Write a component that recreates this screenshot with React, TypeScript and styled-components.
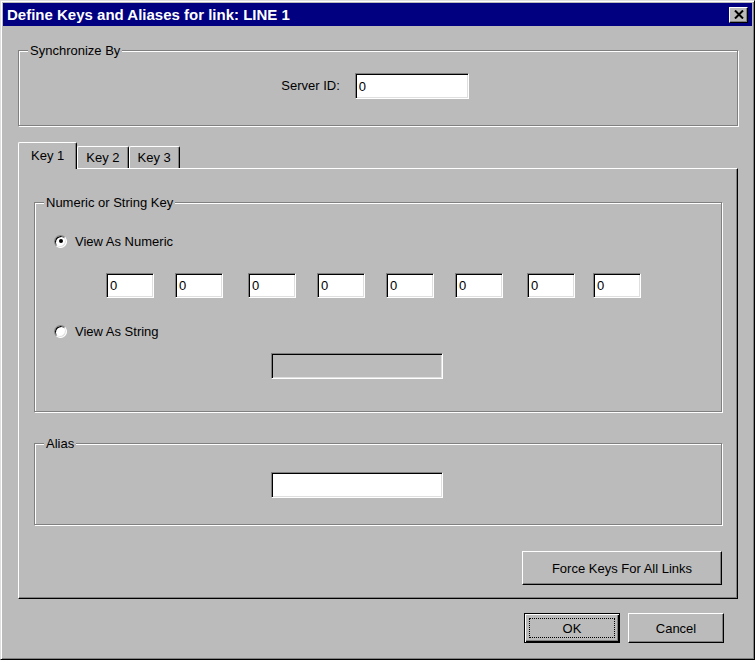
import React from 'react';
import styled, { createGlobalStyle } from 'styled-components';

const face = '#bbbbbb';
const shadow = '#808080';
const light = '#dfdfdf';
const titleBlue = '#000080';

const GlobalStyle = createGlobalStyle`
  html, body {
    margin: 0;
    padding: 0;
    background: ${face};
  }
  body {
    font-family: 'Liberation Sans', Arial, sans-serif;
    font-size: 13px;
    color: #000;
  }
  * {
    box-sizing: border-box;
  }
`;

const Window = styled.div`
  width: 755px;
  height: 660px;
  background: ${face};
  border: 1px solid;
  border-color: ${light} #000 #000 ${light};
  box-shadow: inset 1px 1px #fff, inset -1px -1px ${shadow};
  padding: 2px;
  display: flex;
  flex-direction: column;
`;

const TitleBar = styled.div`
  height: 23px;
  background: ${titleBlue};
  color: #fff;
  font-weight: bold;
  font-size: 15px;
  display: flex;
  align-items: center;
  justify-content: space-between;
  padding: 0 4px 0 4px;
`;

const CloseButton = styled.button`
  width: 19px;
  height: 16px;
  padding: 0;
  background: ${face};
  border: 1px solid;
  border-color: #fff #000 #000 #fff;
  box-shadow: inset -1px -1px ${shadow};
  display: flex;
  align-items: center;
  justify-content: center;
`;

const Body = styled.div`
  padding: 24px 14px 0 15px;
  display: flex;
  flex-direction: column;
`;

const GroupBox = styled.div<{ $h: number; $top?: number }>`
  position: relative;
  height: ${(p) => p.$h}px;
  margin-top: ${(p) => p.$top ?? 0}px;
  border: 1px solid ${shadow};
  box-shadow: inset 1px 1px #fff, 1px 1px #fff;
  display: flex;
  flex-direction: column;
  align-items: flex-start;
`;

const Legend = styled.span`
  position: absolute;
  top: -8px;
  left: 9px;
  padding: 0 2px;
  line-height: 15px;
  background: ${face};
`;

const ServerRow = styled.div`
  align-self: stretch;
  display: flex;
  justify-content: center;
  align-items: center;
  gap: 15px;
  padding: 22px 6px 0 0;
`;

const Label = styled.label`
  line-height: 16px;
`;

const Field = styled.input<{ $w: number; $h?: number; $left?: number; $top?: number }>`
  width: ${(p) => p.$w}px;
  height: ${(p) => p.$h ?? 26}px;
  margin: ${(p) => p.$top ?? 0}px 0 0 ${(p) => p.$left ?? 0}px;
  flex: none;
  padding: 0 3px;
  font: inherit;
  color: #000;
  background: #fff;
  border: 1px solid;
  border-color: ${shadow} #fff #fff ${shadow};
  box-shadow: inset 1px 1px #000, inset -1px -1px ${light};
  outline: none;
  &:disabled {
    background: ${face};
  }
`;

const TabRow = styled.div`
  margin-top: 16px;
  height: 26px;
  display: flex;
  align-items: flex-end;
  position: relative;
  z-index: 1;
`;

const Tab = styled.div<{ $active?: boolean }>`
  height: ${(p) => (p.$active ? 27 : 22)}px;
  margin-bottom: ${(p) => (p.$active ? -1 : 0)}px;
  padding: 0 ${(p) => (p.$active ? 12 : 8)}px ${(p) => (p.$active ? 1 : 0)}px;
  display: flex;
  align-items: center;
  background: ${face};
  border-top: 1px solid #fff;
  border-left: 1px solid #fff;
  border-right: 1px solid #000;
  border-top-left-radius: 2px;
  border-top-right-radius: 2px;
  box-shadow: inset -1px 0 ${shadow};
`;

const Panel = styled.div`
  height: 431px;
  border: 1px solid;
  border-color: #fff #000 #000 #fff;
  box-shadow: inset -1px -1px ${shadow};
  padding: 33px 15px 0 15px;
  display: flex;
  flex-direction: column;
`;

const RadioRow = styled.label<{ $top: number }>`
  display: flex;
  align-items: center;
  gap: 8px;
  height: 16px;
  margin: ${(p) => p.$top}px 0 0 19px;
`;

const RadioDot = styled.span<{ $checked?: boolean }>`
  position: relative;
  width: 13px;
  height: 13px;
  border-radius: 50%;
  border: 1px solid;
  border-color: ${shadow} #fff #fff ${shadow};
  box-shadow: inset 1px 1px #000, inset -1px -1px ${light};
  background: #fff;
  &::after {
    content: '';
    display: ${(p) => (p.$checked ? 'block' : 'none')};
    position: absolute;
    left: 3.5px;
    top: 3.5px;
    width: 4px;
    height: 4px;
    border-radius: 50%;
    background: #000;
  }
`;

const FieldRow = styled.div`
  display: flex;
  margin: 24px 0 0 71px;
`;

const ButtonRow = styled.div<{ $top: number; $right?: number }>`
  display: flex;
  justify-content: flex-end;
  gap: 8px;
  margin-top: ${(p) => p.$top}px;
  padding-right: ${(p) => p.$right ?? 0}px;
`;

const Button = styled.button<{ $w: number; $h: number; $default?: boolean }>`
  position: relative;
  width: ${(p) => p.$w}px;
  height: ${(p) => p.$h}px;
  font: inherit;
  color: #000;
  background: ${face};
  padding: 0;
  border: 1px solid;
  border-color: ${(p) => (p.$default ? '#000' : '#fff #000 #000 #fff')};
  box-shadow: ${(p) =>
    p.$default
      ? `inset 1px 1px #fff, inset -1px -1px #000, inset -2px -2px ${shadow}`
      : `inset -1px -1px ${shadow}`};
  &::after {
    content: '';
    display: ${(p) => (p.$default ? 'block' : 'none')};
    position: absolute;
    inset: 4px;
    border: 1px dotted #000;
  }
`;

const fieldGaps = [0, 21, 25, 21, 21, 21, 24, 18];

const App = () => {
  return (
    <>
      <GlobalStyle />
      <Window>
        <TitleBar>
          <span>Define Keys and Aliases for link: LINE 1</span>
          <CloseButton aria-label="Close">
            <svg width="10" height="9" viewBox="0 0 10 9">
              <path d="M1 0.5 L9 8.5 M9 0.5 L1 8.5" stroke="#000" strokeWidth="2" fill="none" />
            </svg>
          </CloseButton>
        </TitleBar>
        <Body>
          <GroupBox $h={76}>
            <Legend>Synchronize By</Legend>
            <ServerRow>
              <Label>Server ID:</Label>
              <Field $w={114} defaultValue="0" readOnly />
            </ServerRow>
          </GroupBox>

          <TabRow>
            <Tab $active>Key 1</Tab>
            <Tab>Key 2</Tab>
            <Tab>Key 3</Tab>
          </TabRow>
          <Panel>
            <GroupBox $h={210}>
              <Legend>Numeric or String Key</Legend>
              <RadioRow $top={30}>
                <RadioDot $checked />
                View As Numeric
              </RadioRow>
              <FieldRow>
                {fieldGaps.map((g, i) => (
                  <Field key={i} $w={48} $h={25} $left={g} defaultValue="0" readOnly />
                ))}
              </FieldRow>
              <RadioRow $top={25}>
                <RadioDot />
                View As String
              </RadioRow>
              <Field $w={172} $left={236} $top={14} disabled />
            </GroupBox>

            <GroupBox $h={82} $top={31}>
              <Legend>Alias</Legend>
              <Field $w={172} $left={236} $top={28} readOnly />
            </GroupBox>

            <ButtonRow $top={26}>
              <Button $w={200} $h={34}>Force Keys For All Links</Button>
            </ButtonRow>
          </Panel>

          <ButtonRow $top={14} $right={14}>
            <Button $w={96} $h={30} $default>OK</Button>
            <Button $w={96} $h={30}>Cancel</Button>
          </ButtonRow>
        </Body>
      </Window>
    </>
  );
};

export default App;
